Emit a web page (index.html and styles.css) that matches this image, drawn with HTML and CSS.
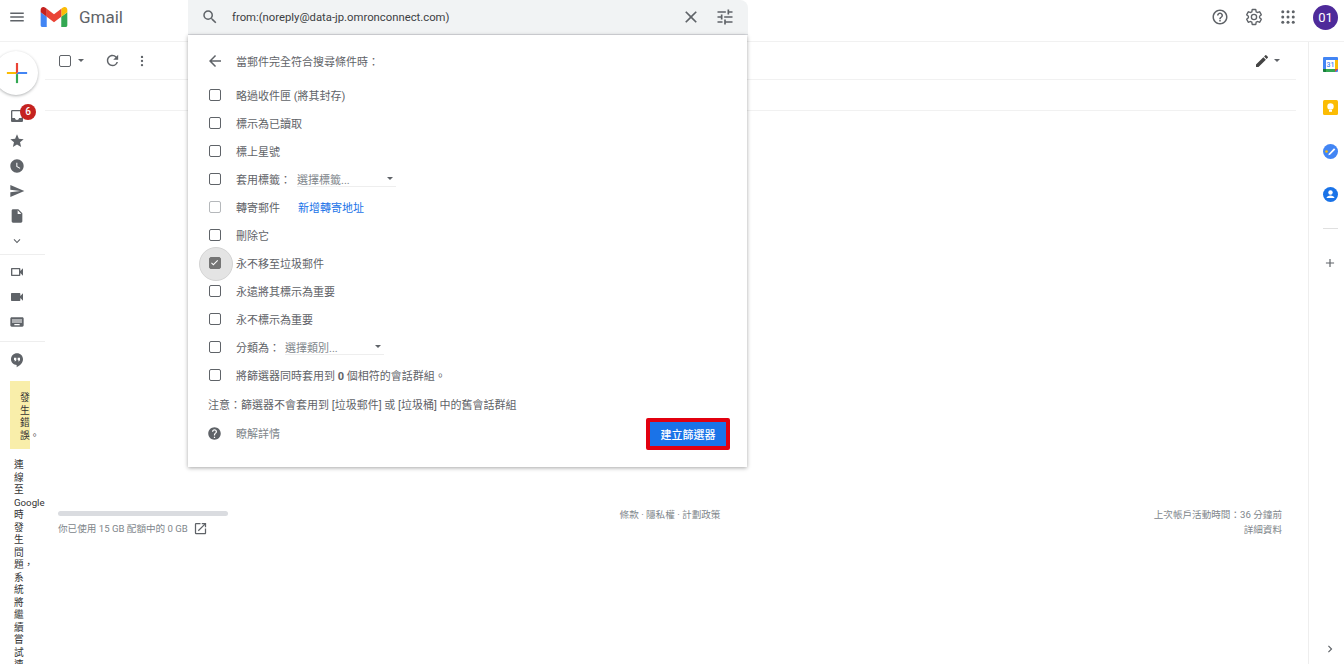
FILE: index.html
```html
<!DOCTYPE html>
<html lang="zh-Hant">
<head>
    <meta charset="UTF-8">
    <title>Gmail</title>
    <link rel="stylesheet" href="styles.css">
</head>
<body>
    <header class="topbar">
        <div class="brand">
            <svg class="menu-icon" viewBox="0 0 24 24"><path d="M3 18h18v-2H3v2zm0-5h18v-2H3v2zm0-7v2h18V6H3z"/></svg>
            <svg class="logo" viewBox="52 42 88 66">
                <path fill="#4285f4" d="M58 108h14V74L52 59v43c0 3.32 2.69 6 6 6"/>
                <path fill="#34a853" d="M120 108h14c3.32 0 6-2.69 6-6V59l-20 15"/>
                <path fill="#fbbc04" d="M120 48v26l20-15v-8c0-7.42-8.47-11.65-14.4-7.2"/>
                <path fill="#ea4335" d="M72 74V48l24 18 24-18v26L96 92"/>
                <path fill="#c5221f" d="M52 51v8l20 15V48l-5.6-4.2c-5.94-4.45-14.4-.22-14.4 7.2"/>
            </svg>
            <span class="logo-text">Gmail</span>
        </div>

        <div class="search">
            <div class="search-bar">
                <svg class="icon search-icon" viewBox="0 0 24 24"><path d="M15.5 14h-.79l-.28-.27A6.471 6.471 0 0 0 16 9.5 6.5 6.5 0 1 0 9.5 16c1.61 0 3.09-.59 4.23-1.57l.27.28v.79l5 4.99L20.49 19l-4.99-5zm-6 0C7.01 14 5 11.99 5 9.5S7.01 5 9.5 5 14 7.01 14 9.5 11.99 14 9.5 14z"/></svg>
                <span class="search-text">from:(noreply@data-jp.omronconnect.com)</span>
                <svg class="icon close-icon" viewBox="0 0 24 24"><path d="M19 6.41 17.59 5 12 10.59 6.41 5 5 6.41 10.59 12 5 17.59 6.41 19 12 13.41 17.59 19 19 17.59 13.41 12z"/></svg>
                <svg class="icon tune-icon" viewBox="0 0 24 24"><path d="M3 17v2h6v-2H3zM3 5v2h10V5H3zm10 16v-2h8v-2h-8v-2h-2v6h2zM7 9v2H3v2h4v2h2V9H7zm14 4v-2H11v2h10zm-6-4h2V7h4V5h-4V3h-2v6z"/></svg>
            </div>

            <div class="filter-panel">
                <div class="panel-title">
                    <svg class="icon back-icon" viewBox="0 0 24 24"><path d="M20 11H7.83l5.59-5.59L12 4l-8 8 8 8 1.41-1.41L7.83 13H20v-2z"/></svg>
                    <span>當郵件完全符合搜尋條件時：</span>
                </div>
                <div class="option"><span class="check"></span>略過收件匣 (將其封存)</div>
                <div class="option"><span class="check"></span>標示為已讀取</div>
                <div class="option"><span class="check"></span>標上星號</div>
                <div class="option">
                    <span class="check"></span>套用標籤：
                    <span class="select select-label">選擇標籤...<i class="caret"></i></span>
                </div>
                <div class="option">
                    <span class="check disabled"></span>轉寄郵件
                    <a class="add-link">新增轉寄地址</a>
                </div>
                <div class="option"><span class="check"></span>刪除它</div>
                <div class="option">
                    <span class="check checked">
                        <svg viewBox="0 0 24 24"><path d="M9 16.2 4.8 12l-1.9 1.9L9 20 21.5 7.5 19.6 5.6z"/></svg>
                    </span>永不移至垃圾郵件
                </div>
                <div class="option"><span class="check"></span>永遠將其標示為重要</div>
                <div class="option"><span class="check"></span>永不標示為重要</div>
                <div class="option">
                    <span class="check"></span>分類為：
                    <span class="select select-category">選擇類別...<i class="caret"></i></span>
                </div>
                <div class="option"><span class="check"></span><span>將篩選器同時套用到 <b>0</b> 個相符的會話群組。</span></div>
                <div class="note">注意：篩選器不會套用到 [垃圾郵件] 或 [垃圾桶] 中的舊會話群組</div>
                <div class="panel-foot">
                    <svg class="icon help-fill" viewBox="0 0 24 24"><path d="M12 2C6.48 2 2 6.48 2 12s4.48 10 10 10 10-4.48 10-10S17.52 2 12 2zm1 17h-2v-2h2v2zm2.07-7.75-.9.92C13.45 12.9 13 13.5 13 15h-2v-.5c0-1.1.45-2.1 1.17-2.83l1.24-1.26c.37-.36.59-.86.59-1.41 0-1.1-.9-2-2-2s-2 .9-2 2H8c0-2.21 1.79-4 4-4s4 1.79 4 4c0 .88-.36 1.68-.93 2.25z"/></svg>
                    <span class="learn-more">瞭解詳情</span>
                    <button class="create-btn">建立篩選器</button>
                </div>
            </div>
        </div>

        <div class="top-actions">
            <svg class="icon top-icon" viewBox="0 0 24 24"><path d="M11 18h2v-2h-2v2zm1-16C6.48 2 2 6.48 2 12s4.48 10 10 10 10-4.48 10-10S17.52 2 12 2zm0 18c-4.41 0-8-3.59-8-8s3.59-8 8-8 8 3.59 8 8-3.59 8-8 8zm0-14c-2.21 0-4 1.79-4 4h2c0-1.1.9-2 2-2s2 .9 2 2c0 2-3 1.75-3 5h2c0-2.25 3-2.5 3-5 0-2.21-1.79-4-4-4z"/></svg>
            <svg class="top-icon gear" viewBox="0 0 24 24"><path d="M19.43 12.98c.04-.32.07-.64.07-.98 0-.34-.03-.66-.07-.98l2.11-1.65c.19-.15.24-.42.12-.64l-2-3.46c-.09-.16-.26-.25-.44-.25-.06 0-.12.01-.17.03l-2.49 1c-.52-.4-1.08-.73-1.69-.98l-.38-2.65C14.46 2.18 14.25 2 14 2h-4c-.25 0-.46.18-.49.42l-.38 2.65c-.61.25-1.17.59-1.69.98l-2.49-1c-.06-.02-.12-.03-.18-.03-.17 0-.34.09-.43.25l-2 3.46c-.13.22-.07.49.12.64l2.11 1.65c-.04.32-.07.65-.07.98 0 .33.03.66.07.98l-2.11 1.65c-.19.15-.24.42-.12.64l2 3.46c.09.16.26.25.44.25.06 0 .12-.01.17-.03l2.49-1c.52.4 1.08.73 1.69.98l.38 2.65c.03.24.24.42.49.42h4c.25 0 .46-.18.49-.42l.38-2.65c.61-.25 1.17-.59 1.69-.98l2.49 1c.06.02.12.03.18.03.17 0 .34-.09.43-.25l2-3.46c.12-.22.07-.49-.12-.64l-2.11-1.65zM12 15.5c-1.93 0-3.5-1.57-3.5-3.5s1.57-3.5 3.5-3.5 3.5 1.57 3.5 3.5-1.57 3.5-3.5 3.5z"/></svg>
            <svg class="icon top-icon" viewBox="0 0 24 24">
                <circle cx="5" cy="5" r="2"/><circle cx="12" cy="5" r="2"/><circle cx="19" cy="5" r="2"/>
                <circle cx="5" cy="12" r="2"/><circle cx="12" cy="12" r="2"/><circle cx="19" cy="12" r="2"/>
                <circle cx="5" cy="19" r="2"/><circle cx="12" cy="19" r="2"/><circle cx="19" cy="19" r="2"/>
            </svg>
            <div class="avatar">01</div>
        </div>
    </header>

    <div class="main">
        <nav class="left-rail">
            <div class="compose">
                <svg viewBox="0 0 36 36">
                    <path fill="#34a853" d="M16.5 19.5h3V32h-3z"/>
                    <path fill="#4285f4" d="M19.5 16.5H32v3H16.5z"/>
                    <path fill="#fbbc05" d="M4 16.5h15.500l-3 3H4z"/>
                    <path fill="#ea4335" d="M16.5 4h3v12.500l-3 3z"/>
                </svg>
            </div>
            <div class="rail-item">
                <svg class="icon" viewBox="0 0 24 24"><path d="M19 3H5c-1.1 0-2 .9-2 2v14c0 1.1.9 2 2 2h14c1.1 0 2-.9 2-2V5c0-1.1-.9-2-2-2zm0 12h-4c0 1.66-1.35 3-3 3s-3-1.34-3-3H4.99V5H19v10z"/></svg>
                <span class="badge">6</span>
            </div>
            <div class="rail-item"><svg class="icon" viewBox="0 0 24 24"><path d="M12 17.27 18.18 21l-1.64-7.03L22 9.24l-7.19-.61L12 2 9.19 8.63 2 9.24l5.46 4.73L5.82 21z"/></svg></div>
            <div class="rail-item"><svg class="icon" viewBox="0 0 24 24"><path d="M12 2C6.5 2 2 6.5 2 12s4.5 10 10 10 10-4.5 10-10S17.5 2 12 2zm4.2 14.2L11 13V7h1.5v5.2l4.5 2.7-.8 1.3z"/></svg></div>
            <div class="rail-item"><svg class="icon" viewBox="0 0 24 24"><path d="M2.01 21 23 12 2.01 3 2 10l15 2-15 2z"/></svg></div>
            <div class="rail-item"><svg class="icon" viewBox="0 0 24 24"><path d="M6 2c-1.1 0-1.99.9-1.99 2L4 20c0 1.1.89 2 1.99 2H18c1.1 0 2-.9 2-2V8l-6-6H6zm7 7V3.5L18.5 9H13z"/></svg></div>
            <div class="rail-item more-labels"><svg class="icon" viewBox="0 0 24 24"><path d="M16.59 8.59 12 13.17 7.41 8.59 6 10l6 6 6-6z"/></svg></div>
            <div class="rail-divider first"></div>
            <div class="rail-item"><svg class="icon" viewBox="0 0 24 24"><path d="M15 8v8H5V8h10m1-2H4c-.55 0-1 .45-1 1v10c0 .55.45 1 1 1h12c.55 0 1-.45 1-1v-3.5l4 4v-11l-4 4V7c0-.55-.45-1-1-1z"/></svg></div>
            <div class="rail-item"><svg class="icon" viewBox="0 0 24 24"><path d="M17 10.5V7c0-.55-.45-1-1-1H4c-.55 0-1 .45-1 1v10c0 .55.45 1 1 1h12c.55 0 1-.45 1-1v-3.5l4 4v-11l-4 4z"/></svg></div>
            <div class="rail-item"><svg class="icon" viewBox="0 0 24 24"><path d="M20 5H4c-1.1 0-1.99.9-1.99 2L2 17c0 1.1.9 2 2 2h16c1.1 0 2-.9 2-2V7c0-1.1-.9-2-2-2zm-9 3h2v2h-2V8zm0 3h2v2h-2v-2zM8 8h2v2H8V8zm0 3h2v2H8v-2zm-1 2H5v-2h2v2zm0-3H5V8h2v2zm9 7H8v-2h8v2zm0-4h-2v-2h2v2zm0-3h-2V8h2v2zm3 3h-2v-2h2v2zm0-3h-2V8h2v2z"/></svg></div>
            <div class="rail-divider second"></div>
            <div class="rail-item hangouts">
                <svg class="icon" viewBox="0 0 24 24">
                    <path d="M12 2C6.9 2 3 5.9 3 11c0 4.7 4 8.5 8.5 8.5V23c4.9-2.4 9.5-6.6 9.5-12 0-5.1-3.9-9-9-9z"/>
                    <path fill="#fff" d="M7.5 8.5H11v3.7L9.4 14H8l1-2H7.5zM13 8.5h3.5v3.7L14.900 14h-1.400l1-2H13z"/>
                </svg>
            </div>
            <div class="error-box">發生錯誤。</div>
            <div class="error-text">連線至 Google 時發生問題，系統將繼續嘗試連線</div>
        </nav>

        <section class="content">
            <div class="toolbar">
                <div class="toolbar-left">
                    <span class="select-all"></span>
                    <i class="caret"></i>
                    <svg class="icon refresh" viewBox="0 0 24 24"><path d="M17.65 6.35A7.958 7.958 0 0 0 12 4c-4.42 0-7.99 3.58-7.99 8s3.57 8 7.99 8c3.73 0 6.84-2.55 7.73-6h-2.08A5.99 5.99 0 0 1 12 18c-3.31 0-6-2.69-6-6s2.69-6 6-6c1.66 0 3.14.69 4.22 1.78L13 11h7V4l-2.35 2.35z"/></svg>
                    <svg class="icon more" viewBox="0 0 24 24"><circle cx="12" cy="5" r="2"/><circle cx="12" cy="12" r="2"/><circle cx="12" cy="19" r="2"/></svg>
                </div>
                <div class="toolbar-right">
                    <svg class="icon pencil" viewBox="0 0 24 24"><path d="M3 17.25V21h3.75L17.81 9.94l-3.75-3.75L3 17.25zM20.71 7.04a1 1 0 0 0 0-1.41l-2.34-2.34a1 1 0 0 0-1.41 0l-1.83 1.83 3.75 3.75 1.83-1.83z"/></svg>
                    <i class="caret"></i>
                </div>
            </div>
            <div class="list-head"></div>

            <footer class="footer">
                <div class="storage">
                    <div class="storage-bar"></div>
                    <div class="storage-text">
                        <span>你已使用 15 GB 配額中的 0 GB</span>
                        <svg class="icon open-icon" viewBox="0 0 24 24"><path d="M19 19H5V5h7V3H5a2 2 0 0 0-2 2v14a2 2 0 0 0 2 2h14c1.1 0 2-.9 2-2v-7h-2v7zM14 3v2h3.59l-9.83 9.83 1.41 1.41L19 6.41V10h2V3h-7z"/></svg>
                    </div>
                </div>
                <div class="terms">條款 · 隱私權 · 計劃政策</div>
                <div class="activity">
                    <div>上次帳戶活動時間：36 分鐘前</div>
                    <div>詳細資料</div>
                </div>
            </footer>
        </section>

        <aside class="right-rail">
            <svg class="addon" viewBox="0 0 15 15">
                <rect width="15" height="15" rx="1" fill="#4285f4"/>
                <rect x="3" y="3" width="9" height="9" fill="#fff"/>
                <rect x="12" y="3" width="3" height="9" fill="#fbbc04"/>
                <rect x="3" y="12" width="9" height="3" fill="#34a853"/>
                <path d="M12 12h3l-3 3z" fill="#ea4335"/>
                <path d="M0 12h3v3H1a1 1 0 0 1-1-1z" fill="#188038"/>
                <text x="7.5" y="10" class="cal-day">31</text>
            </svg>
            <svg class="addon" viewBox="0 0 15 15">
                <rect width="15" height="15" rx="1.5" fill="#fbbc04"/>
                <circle cx="7.5" cy="6.5" r="3.2" fill="#fff"/>
                <rect x="6" y="10" width="3" height="1.8" fill="#fff"/>
            </svg>
            <svg class="addon" viewBox="0 0 15 15">
                <circle cx="7.5" cy="7.5" r="7.5" fill="#4285f4"/>
                <path d="M6 9.5 11 4.3l1.3 1.2-5.2 5.3-1.8.5z" fill="#fff"/>
                <circle cx="3.5" cy="7.5" r="1.3" fill="#fbbc04"/>
            </svg>
            <svg class="addon" viewBox="0 0 15 15">
                <circle cx="7.5" cy="7.5" r="7.5" fill="#1a73e8"/>
                <circle cx="7.5" cy="5.5" r="2.2" fill="#fff"/>
                <path d="M3.5 11c0-1.8 2.5-2.6 4-2.6s4 .8 4 2.6z" fill="#fff"/>
            </svg>
            <div class="addon-divider"></div>
            <svg class="icon addon-plus" viewBox="0 0 24 24"><path d="M19 13h-6v6h-2v-6H5v-2h6V5h2v6h6v2z"/></svg>
            <svg class="icon addon-chevron" viewBox="0 0 24 24"><path d="M8.59 16.59 13.17 12 8.59 7.41 10 6l6 6-6 6z"/></svg>
        </aside>
    </div>
</body>
</html>
```

FILE: styles.css
```css
* {
    box-sizing: border-box;
}

body {
    margin: 0;
    height: 664px;
    overflow: hidden;
    background: #fff;
    color: #5f6368;
    font-family: Roboto, "Noto Sans CJK TC", sans-serif;
    font-size: 11px;
}

.icon {
    fill: #5f6368;
    flex: none;
}

.caret {
    display: block;
    width: 0;
    height: 0;
    border-left: 3.5px solid transparent;
    border-right: 3.5px solid transparent;
    border-top: 3.5px solid #5f6368;
}

/* top bar */
.topbar {
    display: flex;
    height: 42px;
    border-bottom: 1px solid #f1f1f1;
}

.brand {
    display: flex;
    align-items: flex-start;
    width: 188px;
    padding: 7px 0 0 8px;
}

.menu-icon {
    width: 18px;
    height: 20px;
    fill: #5f6368;
}

.logo {
    width: 28px;
    height: 20px;
    margin-left: 14px;
}

.logo-text {
    margin-left: 11px;
    font-size: 17px;
    line-height: 21px;
    color: #5f6368;
}

.search {
    position: relative;
    width: 560px;
}

.search-bar {
    display: flex;
    align-items: center;
    height: 35px;
    padding: 0 13px 0 13px;
    background: #f1f3f4;
    border-radius: 0 8px 0 0;
    border-bottom: 1px solid #dadce0;
}

.search-icon {
    width: 18px;
    height: 18px;
}

.search-text {
    margin-left: 13px;
    flex: 1;
    font-size: 11.3px;
    color: #3c4043;
}

.close-icon {
    width: 20px;
    height: 20px;
    margin-right: 14px;
}

.tune-icon {
    width: 20px;
    height: 20px;
}

/* filter panel */
.filter-panel {
    position: absolute;
    top: 35px;
    left: 0;
    z-index: 5;
    width: 559px;
    height: 432px;
    background: #fff;
    box-shadow: 0 1px 4px rgba(0, 0, 0, 0.35);
    padding: 0 17px 0 20px;
}

.panel-title {
    display: flex;
    align-items: center;
    height: 52px;
    margin-bottom: -6px;
    color: #5f6368;
}

.back-icon {
    width: 18px;
    height: 18px;
    margin: 0 12px 0 -2px;
}

.option {
    display: flex;
    align-items: center;
    height: 28px;
    color: #5f6368;
}

.check {
    position: relative;
    width: 12px;
    height: 12px;
    margin: 0 15px 0 1px;
    border: 1.5px solid #5f6368;
    border-radius: 2px;
    flex: none;
}

.check.disabled {
    border-color: #b5b8bb;
}

.check.checked {
    background: #757575;
    border-color: #757575;
}

.check.checked svg {
    display: block;
    width: 9px;
    height: 9px;
    fill: #fff;
}

.check.checked::before {
    content: "";
    position: absolute;
    top: -11.5px;
    left: -11.5px;
    z-index: -1;
    width: 32px;
    height: 32px;
    background: #e4e4e4;
    border: 1px solid #d4d4d4;
    border-radius: 50%;
}

.select {
    display: flex;
    align-items: center;
    justify-content: space-between;
    height: 15px;
    padding-right: 3px;
    color: #80868b;
    border-bottom: 1px solid #eee;
}

.select-label {
    width: 99px;
    margin-left: 6px;
}

.select-category {
    width: 99px;
    margin-left: 5px;
}

.add-link {
    margin-left: 18px;
    color: #1a73e8;
}

.note {
    height: 16px;
    margin-top: 9px;
    line-height: 16px;
    color: #5f6368;
}

.panel-foot {
    display: flex;
    align-items: flex-start;
    margin-top: 4px;
}

.help-fill {
    width: 15px;
    height: 15px;
    margin: 8px 14px 0 -1px;
}

.learn-more {
    flex: 1;
    padding-top: 7px;
    color: #80868b;
}

.create-btn {
    width: 84px;
    height: 32px;
    padding: 0;
    background: #1a73e8;
    border: 4px solid #e2000f;
    border-radius: 2px;
    color: #fff;
    font-family: inherit;
    font-size: 11px;
    font-weight: 500;
}

.top-actions {
    display: flex;
    align-items: flex-start;
    margin-left: auto;
    padding: 5px 6px 0 0;
}

.top-icon {
    width: 18px;
    height: 18px;
    margin: 3px 16px 0 0;
}

.gear {
    fill: none;
    stroke: #5f6368;
    stroke-width: 1.8;
}

.avatar {
    width: 25px;
    height: 25px;
    border-radius: 50%;
    background: #4e2a9a;
    color: #fff;
    font-size: 13px;
    line-height: 25px;
    text-align: center;
}

/* main area */
.main {
    display: flex;
    height: 622px;
}

.left-rail {
    width: 45px;
    flex: none;
    overflow: hidden;
}

.compose {
    display: flex;
    align-items: center;
    justify-content: center;
    width: 44px;
    height: 44px;
    margin: 9px 0 8.5px -6px;
    padding-left: 2px;
    background: #fff;
    border-radius: 50%;
    box-shadow: 0 1px 3px rgba(60, 64, 67, 0.4);
}

.compose svg {
    width: 26px;
    height: 26px;
}

.rail-item {
    position: relative;
    display: flex;
    align-items: center;
    height: 25px;
    padding-left: 9px;
}

.rail-item .icon {
    width: 16px;
    height: 16px;
}

.more-labels .icon {
    transform: scale(0.85);
}

.badge {
    position: absolute;
    top: 0;
    left: 20px;
    width: 16px;
    height: 16px;
    background: #c5221f;
    border-radius: 50%;
    color: #fff;
    font-size: 10px;
    font-weight: 500;
    line-height: 16px;
    text-align: center;
}

.rail-divider {
    height: 1px;
    background: #eee;
}

.rail-divider.first {
    margin-bottom: 5px;
}

.rail-divider.second {
    margin-top: 6px;
}

.hangouts {
    margin-top: 6px;
}

.error-box {
    width: 20px;
    margin: 8.5px 0 0 10px;
    padding: 11px 0 7px 10px;
    background: #f9eeaa;
    color: #333;
    font-size: 9.7px;
    line-height: 12.5px;
}

.error-text {
    width: 10px;
    margin: 10px 0 0 14px;
    color: #333;
    font-size: 9.7px;
    line-height: 12.5px;
}

.content {
    flex: 1;
    min-width: 0;
    margin-right: 12px;
}

.toolbar {
    display: flex;
    align-items: center;
    justify-content: space-between;
    height: 38px;
    padding: 0 16.5px 0 14px;
    border-bottom: 1px solid #f1f1f1;
}

.toolbar-left,
.toolbar-right {
    display: flex;
    align-items: center;
}

.select-all {
    width: 12px;
    height: 12px;
    margin-right: 7px;
    border: 1.5px solid #5f6368;
    border-radius: 2px;
}

.refresh {
    width: 17px;
    height: 17px;
    margin-left: 20px;
}

.more {
    width: 14px;
    height: 14px;
    margin-left: 14px;
}

.pencil {
    width: 16px;
    height: 16px;
    margin-right: 4px;
    fill: #444;
}

.list-head {
    height: 31px;
    border-bottom: 1px solid #f1f1f1;
}

.footer {
    display: grid;
    grid-template-columns: 1fr auto 1fr;
    margin-top: 396px;
    padding: 0 14px 0 13px;
    color: #80868b;
    font-size: 9.6px;
}

.storage-bar {
    width: 170px;
    height: 5px;
    margin-top: 4px;
    background: #dadce0;
    border-radius: 3px;
}

.storage-text {
    display: flex;
    align-items: center;
    height: 16px;
    margin-top: 4px;
}

.open-icon {
    width: 15px;
    height: 15px;
    margin-left: 5px;
}

.terms {
    line-height: 16px;
}

.activity {
    line-height: 15px;
    text-align: right;
}

.right-rail {
    display: flex;
    flex-direction: column;
    align-items: flex-start;
    width: 36px;
    flex: none;
    padding: 15px 0 8px 14px;
    border-left: 1px solid #eee;
}

.addon {
    width: 15px;
    height: 15px;
    margin-bottom: 28.3px;
}

.cal-day {
    fill: #4285f4;
    font-size: 7px;
    font-weight: 500;
    text-anchor: middle;
}

.addon-divider {
    width: 15px;
    height: 1px;
    margin-top: -2px;
    background: #e0e0e0;
}

.addon-plus {
    width: 14px;
    height: 14px;
    margin-top: 27px;
}

.addon-chevron {
    width: 14px;
    height: 14px;
    margin-top: auto;
}
```
